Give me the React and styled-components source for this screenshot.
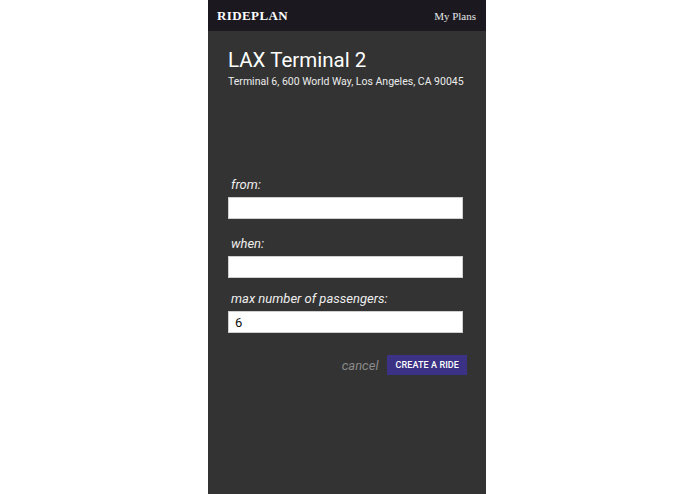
import React from 'react';
import styled, { createGlobalStyle } from 'styled-components';

const GlobalStyle = createGlobalStyle`
  html, body {
    margin: 0;
    padding: 0;
    background: #ffffff;
  }
  * {
    box-sizing: border-box;
  }
`;

const Screen = styled.div`
  width: 278px;
  height: 494px;
  margin: 0 0 0 calc(50% - 139.5px);
  background: #333333;
  display: flex;
  flex-direction: column;
`;

const TopBar = styled.header`
  height: 31px;
  background: #1b1820;
  display: flex;
  align-items: center;
  justify-content: space-between;
  padding: 0 10px 0 9px;
`;

const Logo = styled.span`
  font-family: 'Liberation Serif', 'DejaVu Serif', serif;
  font-weight: bold;
  font-size: 13px;
  letter-spacing: 0.4px;
  color: #ffffff;
`;

const NavLink = styled.a`
  font-family: 'Liberation Serif', 'DejaVu Serif', serif;
  font-size: 11px;
  color: #e6e6e6;
  text-decoration: none;
`;

const Body = styled.main`
  padding: 17px 19px 0 20px;
  display: flex;
  flex-direction: column;
`;

const Title = styled.h1`
  margin: 0;
  font-family: Roboto, sans-serif;
  font-weight: 400;
  font-size: 20.5px;
  line-height: 24px;
  color: #ffffff;
`;

const Address = styled.p`
  margin: 3px 0 0 0;
  font-family: Roboto, sans-serif;
  font-size: 10.5px;
  line-height: 14px;
  color: #ececec;
  white-space: nowrap;
`;

const Form = styled.form`
  margin-top: 88px;
  display: flex;
  flex-direction: column;
`;

const Field = styled.div`
  display: flex;
  flex-direction: column;
  margin-top: ${p => p.$top || 0}px;
`;

const Label = styled.label`
  font-family: Roboto, sans-serif;
  font-style: italic;
  font-size: 13px;
  line-height: 16px;
  color: #eeeeee;
  padding-left: 3px;
  margin-bottom: 4px;
`;

const Input = styled.input`
  width: 235px;
  height: 22px;
  border: 1px solid #cfcfcf;
  background: #ffffff;
  padding: 0 6px;
  font-family: Roboto, sans-serif;
  font-size: 13px;
  color: #111111;
  outline: none;
`;

const Actions = styled.div`
  margin-top: 22px;
  display: flex;
  justify-content: flex-end;
  align-items: center;
  gap: 9px;
`;

const CancelButton = styled.button`
  border: none;
  background: none;
  padding: 0;
  font-family: Roboto, sans-serif;
  font-style: italic;
  font-size: 13px;
  color: #8a8a8a;
  cursor: pointer;
`;

const CreateButton = styled.button`
  border: none;
  background: #3b3185;
  color: #ffffff;
  height: 20px;
  padding: 0 8px;
  font-family: Roboto, sans-serif;
  font-weight: 500;
  font-size: 9px;
  letter-spacing: 0.1px;
  text-transform: uppercase;
  cursor: pointer;
`;

export default function App() {
  return (
    <>
      <GlobalStyle />
      <Screen>
        <TopBar>
          <Logo>RIDEPLAN</Logo>
          <NavLink href="#">My Plans</NavLink>
        </TopBar>
        <Body>
          <Title>LAX Terminal 2</Title>
          <Address>Terminal 6, 600 World Way, Los Angeles, CA 90045</Address>
          <Form onSubmit={e => e.preventDefault()}>
            <Field>
              <Label>from:</Label>
              <Input type="text" />
            </Field>
            <Field $top={17}>
              <Label>when:</Label>
              <Input type="text" />
            </Field>
            <Field $top={13}>
              <Label>max number of passengers:</Label>
              <Input type="text" defaultValue="6" />
            </Field>
            <Actions>
              <CancelButton type="button">cancel</CancelButton>
              <CreateButton type="submit">Create a ride</CreateButton>
            </Actions>
          </Form>
        </Body>
      </Screen>
    </>
  );
}
